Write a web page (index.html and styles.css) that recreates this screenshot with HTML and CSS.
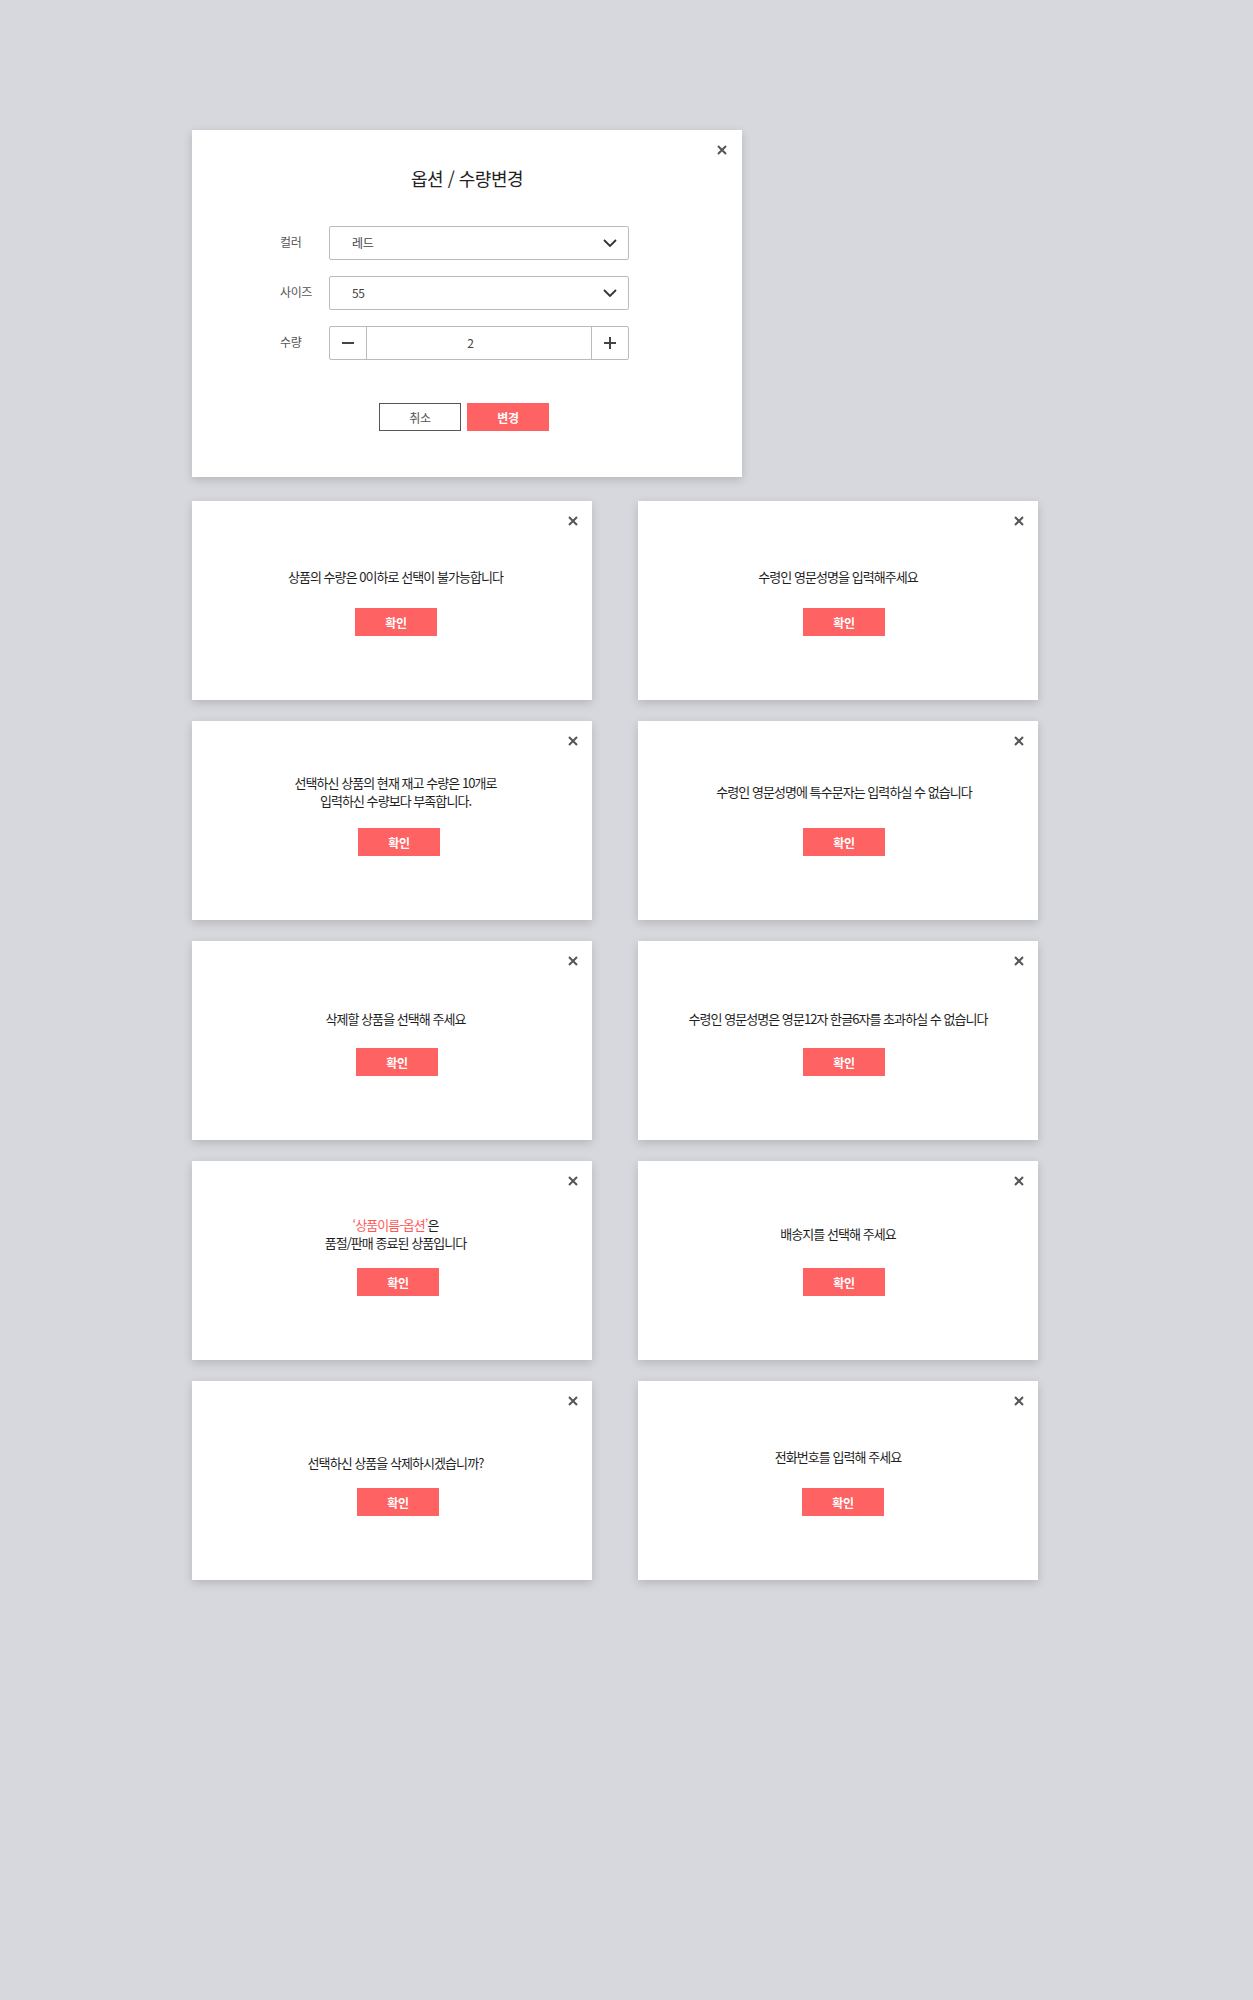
FILE: index.html
```html
<!DOCTYPE html>
<html lang="ko">
<head>
<meta charset="utf-8">
<title>옵션 / 수량변경</title>
<link rel="stylesheet" href="styles.css">
</head>
<body>
<div class="page">
  <section class="modal option-modal">
    <button class="close" type="button" aria-label="닫기"><svg width="10" height="10" viewBox="0 0 10 10"><path d="M1 1L9 9M9 1L1 9" stroke="#555" stroke-width="2"/></svg></button>
    <h2 class="option-title">옵션 / 수량변경</h2>
    <div class="form">
      <div class="row">
        <span class="label">컬러</span>
        <div class="select"><span>레드</span><svg class="chev" width="14" height="8" viewBox="0 0 14 8"><path d="M1 1l6 6 6-6" fill="none" stroke="#333" stroke-width="1.8"/></svg></div>
      </div>
      <div class="row">
        <span class="label">사이즈</span>
        <div class="select"><span>55</span><svg class="chev" width="14" height="8" viewBox="0 0 14 8"><path d="M1 1l6 6 6-6" fill="none" stroke="#333" stroke-width="1.8"/></svg></div>
      </div>
      <div class="row">
        <span class="label">수량</span>
        <div class="qty">
          <span class="qty-btn minus"><svg width="12" height="12" viewBox="0 0 12 12"><path d="M0 6H12" stroke="#444" stroke-width="2"/></svg></span>
          <span class="qty-val">2</span>
          <span class="qty-btn plus"><svg width="12" height="12" viewBox="0 0 12 12"><path d="M0 6H12M6 0V12" stroke="#444" stroke-width="2"/></svg></span>
        </div>
      </div>
    </div>
    <div class="actions">
      <button class="btn btn-line" type="button">취소</button>
      <button class="btn btn-primary" type="button">변경</button>
    </div>
  </section>

  <div class="alerts">
    <section class="modal alert col-l">
      <button class="close close-sm" type="button" aria-label="닫기"><svg width="10" height="10" viewBox="0 0 10 10"><path d="M1 1L9 9M9 1L1 9" stroke="#555" stroke-width="2"/></svg></button>
      <p class="alert-msg pad-67">상품의 수량은 0이하로 선택이 불가능합니다</p>
      <button class="btn btn-primary btn-l8" type="button">확인</button>
    </section>
    <section class="modal alert">
      <button class="close close-sm" type="button" aria-label="닫기"><svg width="10" height="10" viewBox="0 0 10 10"><path d="M1 1L9 9M9 1L1 9" stroke="#555" stroke-width="2"/></svg></button>
      <p class="alert-msg pad-66">수령인 영문성명을 입력해주세요</p>
      <button class="btn btn-primary" type="button">확인</button>
    </section>

    <section class="modal alert col-l">
      <button class="close close-sm" type="button" aria-label="닫기"><svg width="10" height="10" viewBox="0 0 10 10"><path d="M1 1L9 9M9 1L1 9" stroke="#555" stroke-width="2"/></svg></button>
      <p class="alert-msg pad-53">선택하신 상품의 현재 재고 수량은 10개로<br>입력하신 수량보다 부족합니다.</p>
      <button class="btn btn-primary btn-l14" type="button">확인</button>
    </section>
    <section class="modal alert">
      <button class="close close-sm" type="button" aria-label="닫기"><svg width="10" height="10" viewBox="0 0 10 10"><path d="M1 1L9 9M9 1L1 9" stroke="#555" stroke-width="2"/></svg></button>
      <p class="alert-msg pad-62 msg-shift">수령인 영문성명에 특수문자는 입력하실 수 없습니다</p>
      <button class="btn btn-primary" type="button">확인</button>
    </section>

    <section class="modal alert col-l">
      <button class="close close-sm" type="button" aria-label="닫기"><svg width="10" height="10" viewBox="0 0 10 10"><path d="M1 1L9 9M9 1L1 9" stroke="#555" stroke-width="2"/></svg></button>
      <p class="alert-msg pad-68">삭제할 상품을 선택해 주세요</p>
      <button class="btn btn-primary btn-l10" type="button">확인</button>
    </section>
    <section class="modal alert">
      <button class="close close-sm" type="button" aria-label="닫기"><svg width="10" height="10" viewBox="0 0 10 10"><path d="M1 1L9 9M9 1L1 9" stroke="#555" stroke-width="2"/></svg></button>
      <p class="alert-msg pad-68">수령인 영문성명은 영문12자 한글6자를 초과하실 수 없습니다</p>
      <button class="btn btn-primary" type="button">확인</button>
    </section>

    <section class="modal alert col-l">
      <button class="close close-sm" type="button" aria-label="닫기"><svg width="10" height="10" viewBox="0 0 10 10"><path d="M1 1L9 9M9 1L1 9" stroke="#555" stroke-width="2"/></svg></button>
      <p class="alert-msg pad-56"><span class="hl">‘상품이름-옵션’</span>은<br>품절/판매 종료된 상품입니다</p>
      <button class="btn btn-primary" type="button">확인</button>
    </section>
    <section class="modal alert">
      <button class="close close-sm" type="button" aria-label="닫기"><svg width="10" height="10" viewBox="0 0 10 10"><path d="M1 1L9 9M9 1L1 9" stroke="#555" stroke-width="2"/></svg></button>
      <p class="alert-msg pad-65">배송지를 선택해 주세요</p>
      <button class="btn btn-primary" type="button">확인</button>
    </section>

    <section class="modal alert col-l">
      <button class="close close-sm" type="button" aria-label="닫기"><svg width="10" height="10" viewBox="0 0 10 10"><path d="M1 1L9 9M9 1L1 9" stroke="#555" stroke-width="2"/></svg></button>
      <p class="alert-msg pad-74">선택하신 상품을 삭제하시겠습니까?</p>
      <button class="btn btn-primary" type="button">확인</button>
    </section>
    <section class="modal alert">
      <button class="close close-sm" type="button" aria-label="닫기"><svg width="10" height="10" viewBox="0 0 10 10"><path d="M1 1L9 9M9 1L1 9" stroke="#555" stroke-width="2"/></svg></button>
      <p class="alert-msg pad-67">전화번호를 입력해 주세요</p>
      <button class="btn btn-primary btn-l10" type="button">확인</button>
    </section>
  </div>
</div>
</body>
</html>
```

FILE: styles.css
```css
html, body {
  margin: 0;
  padding: 0;
}
body {
  background: #d7d8dd;
  font-family: "Noto Sans CJK KR", "Noto Sans", sans-serif;
  color: #222;
}
.page {
  padding: 130px 0 0 192px;
  min-height: 2000px;
  box-sizing: border-box;
}
.modal {
  position: relative;
  background: #fff;
  box-sizing: border-box;
  box-shadow: 0 3px 9px rgba(0, 0, 0, 0.16);
}
.close {
  position: absolute;
  top: 15px;
  right: 15px;
  width: 10px;
  height: 10px;
  padding: 0;
  border: 0;
  background: none;
  cursor: pointer;
}
.close svg {
  display: block;
}
.close-sm {
  right: 14px;
}

/* option modal */
.option-modal {
  width: 550px;
  height: 347px;
  padding-top: 35px;
}
.option-title {
  margin: 0;
  text-align: center;
  font-size: 18px;
  line-height: 26px;
  font-weight: 400;
  color: #222;
  letter-spacing: -0.5px;
}
.form {
  margin: 35px 0 0 88px;
  display: flex;
  flex-direction: column;
  gap: 16px;
}
.row {
  display: flex;
  align-items: center;
  height: 34px;
}
.label {
  width: 49px;
  font-size: 12px;
  color: #555;
  letter-spacing: -0.4px;
  line-height: 16px;
  margin-top: -2px;
}
.select {
  width: 300px;
  height: 34px;
  box-sizing: border-box;
  border: 1px solid #bbb;
  border-radius: 2px;
  display: flex;
  align-items: center;
  justify-content: space-between;
  padding: 0 11px 0 22px;
  font-size: 12px;
  color: #444;
  letter-spacing: -0.3px;
}
.select span {
  margin-top: -2px;
}
.chev {
  display: block;
}
.qty {
  width: 300px;
  height: 34px;
  box-sizing: border-box;
  border: 1px solid #bbb;
  border-radius: 2px;
  display: flex;
}
.qty-btn {
  width: 36px;
  display: flex;
  align-items: center;
  justify-content: center;
}
.qty-btn svg {
  display: block;
}
.minus {
  border-right: 1px solid #bbb;
}
.plus {
  border-left: 1px solid #bbb;
}
.qty-val {
  flex: 1;
  display: flex;
  align-items: center;
  justify-content: center;
  padding-right: 17px;
  padding-bottom: 2px;
  font-size: 12px;
  color: #444;
}
.actions {
  display: flex;
  justify-content: center;
  gap: 6px;
  margin-top: 43px;
  padding-right: 6px;
}
.btn {
  width: 82px;
  height: 28px;
  box-sizing: border-box;
  padding: 0;
  font-family: inherit;
  font-size: 12px;
  letter-spacing: -0.4px;
  cursor: pointer;
}
.btn-line {
  background: #fff;
  border: 1px solid #555;
  color: #555;
}
.btn-primary {
  background: #ff6262;
  border: 0;
  color: #fff;
  font-weight: 700;
}

/* alert grid */
.alerts {
  display: grid;
  grid-template-columns: 400px 400px;
  column-gap: 46px;
  row-gap: 21px;
  margin-top: 24px;
}
.alert {
  width: 400px;
  height: 199px;
  display: flex;
  flex-direction: column;
  align-items: center;
}
.alert .btn {
  margin-left: 12px;
}
.alert .btn-l8 { margin-left: 8px; }
.alert .btn-l10 { margin-left: 10px; }
.alert .btn-l14 { margin-left: 14px; }
.alert-msg {
  height: 107px;
  box-sizing: border-box;
  margin: 0;
  text-align: center;
  font-size: 13px;
  line-height: 18px;
  color: #1e1e1e;
  letter-spacing: -0.95px;
}
.col-l .alert-msg {
  padding-left: 7px;
}
.alert .msg-shift {
  padding-left: 12px;
}
.hl {
  color: #ff5a5a;
}
.pad-53 { padding-top: 53px; }
.pad-56 { padding-top: 55px; }
.pad-62 { padding-top: 62px; }
.pad-65 { padding-top: 64px; }
.pad-66 { padding-top: 67px; }
.pad-67 { padding-top: 67px; }
.pad-68 { padding-top: 69px; }
.pad-74 { padding-top: 73px; }
```
